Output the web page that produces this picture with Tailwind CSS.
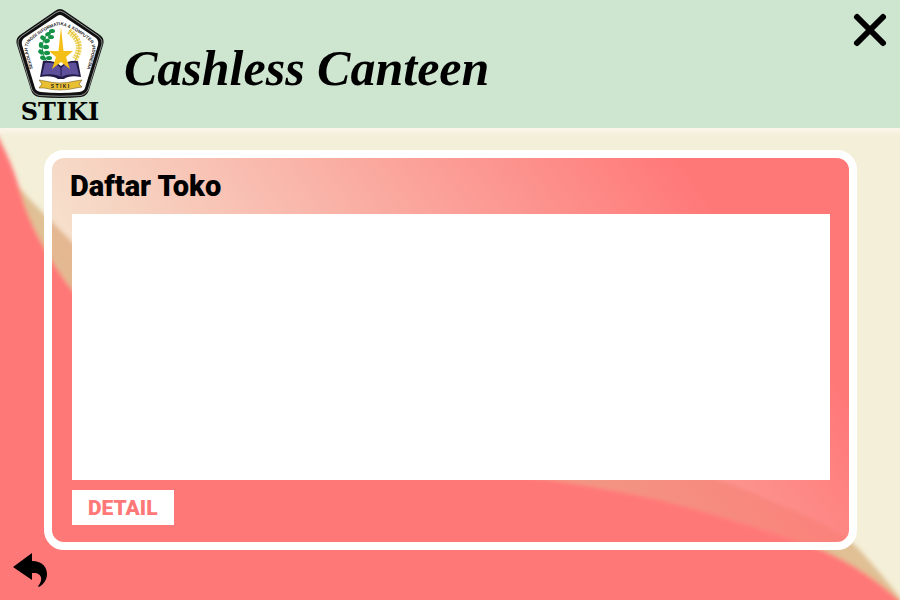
<!DOCTYPE html>
<html lang="id">
<head>
<meta charset="utf-8">
<meta name="viewport" content="width=device-width, initial-scale=1">
<title>Cashless Canteen</title>
<script src="https://cdn.jsdelivr.net/npm/@tailwindcss/browser@4"></script>
</head>
<body class="relative isolate flex min-h-screen flex-col bg-[#f4efd8] font-[Roboto,sans-serif] text-black">

<!-- Wave backdrop -->
<svg class="absolute inset-0 -z-10 h-full w-full" viewBox="0 0 900 600" preserveAspectRatio="none" aria-hidden="true">
  <defs><filter id="soft" x="-5%" y="-5%" width="110%" height="110%"><feGaussianBlur stdDeviation="2"/></filter></defs>
  <g filter="url(#soft)">
    <path fill="#e0c094" d="M-20 200 L10 176 Q24 194 44 214 Q58 228 72 242 C200 390 520 420 700 474 Q740 486 780 505 Q830 523 857 547 Q880 572 905 604 L905 620 L-20 620Z"/>
    <path fill="#ff7878" d="M-20 105 L0 140 C7 155 12 164 18 184 C25 210 34 230 44 247 Q58 272 72 290 C200 440 400 458 545 479 Q600 487 660 500 Q740 520 822 550 Q868 570 905 606 L905 630 L-20 630Z"/>
  </g>
</svg>

<header class="flex h-32 items-start bg-[#cee6d0] pl-4">
  <div class="flex w-22 flex-col items-center pt-2">
    <svg class="h-[90px] w-22" viewBox="16 8 88 90" role="img" aria-label="Lambang STIKI">
      <defs>
        <path id="ring" d="M36 80 L28 52 Q26 44 33 39 Q48 27 60 25 Q72 27 87 39 Q94 44 92 52 L84 80"/>
      </defs>
      <path fill="#111" d="M55 11 Q60 7 65 11 L100 35 Q105 39 103 45 L89 90 Q87 96 81 97 Q60 99 39 97 Q33 96 31 90 L17 45 Q15 39 20 35Z"/>
      <path fill="none" stroke="#dfe3df" stroke-width=".6" d="M56 12.500 Q60 9.500 64 12.500 L99 36.500 Q103 40 102 44 L88 90 Q86 94 81 95.500 Q60 97 39 95.500 Q34 94 32 90 L18 44 Q17 40 21 36.500Z"/>
      <path fill="#fff" d="M57 16 Q60 14 63 16 L96 38 Q99 41 98 45 L85 88 Q84 91 79 92 Q60 94 41 92 Q36 91 35 88 L22 45 Q21 41 24 38Z"/>
      <text font-family="Liberation Sans" font-size="4.400" font-weight="700" fill="#222"><textPath href="#ring" startOffset="50%" text-anchor="middle">SEKOLAH TINGGI INFORMATIKA &amp; KOMPUTER INDONESIA</textPath></text>
      <path fill="none" stroke="#149247" d="M53 29 Q35 43 47 62"/>
      <g fill="#149247">
        <ellipse cx="52" cy="31" rx="3" ry="2"/><ellipse cx="48" cy="34" rx="3" ry="2" transform="rotate(-25 48 34)"/>
        <ellipse cx="51" cy="37" rx="3" ry="2"/><ellipse cx="43" cy="38" rx="3" ry="2.200" transform="rotate(35 43 38)"/>
        <ellipse cx="47" cy="41" rx="3" ry="2.200" transform="rotate(-20 47 41)"/><ellipse cx="41" cy="45" rx="2.200" ry="3"/>
        <ellipse cx="46" cy="47" rx="3" ry="2.200"/><ellipse cx="41" cy="52" rx="3" ry="2.200" transform="rotate(35 41 52)"/>
        <ellipse cx="47" cy="53" rx="3" ry="2.200"/><ellipse cx="43" cy="58" rx="3" ry="2.200" transform="rotate(25 43 58)"/>
        <ellipse cx="49" cy="58" rx="3" ry="2"/>
      </g>
      <path fill="none" stroke="#efd45c" stroke-width="6" stroke-dasharray="2 .8" d="M69 31 Q85 43 75 59"/>
      <path fill="none" stroke="#d9b82e" stroke-width=".8" d="M69 30 Q86 43 75 61"/>
      <path fill="#211b48" d="M43 61 Q54 60 61 66 Q68 60 78 61 L81 77 Q69 75 64 79 L58 79 Q52 75 40 77Z"/>
      <path fill="#5e509b" d="M45 63 Q55 62 61 68 Q67 62 76 63 L79 75 Q68 73 61 77 Q54 73 42 75Z"/>
      <path fill="#211b48" d="M60.500 67h1v10h-1z"/>
      <path fill="#f5bf19" d="M61 27 L63.500 51 L73 51 L66 57 L70 69 L61 62 L52 69 L56 57 L49 51 L58.500 51Z"/>
      <path fill="#e9c033" stroke="#5f4b12" stroke-width=".5" d="M39 80 L45 81 Q60 85 75 81 L82 80 L79 84 L82 87 L76 88 Q60 92 44 88 L39 88 L42 84Z"/>
      <text x="60" y="88" text-anchor="middle" font-family="Liberation Sans" font-size="5" font-weight="700" fill="#222">S T I K I</text>
    </svg>
    <span class="font-['DejaVu_Serif',serif] text-2xl/7 font-bold">STIKI</span>
  </div>
  <h1 class="pt-9 pl-5 font-['Liberation_Serif',serif] text-[50px]/[64px] font-bold italic">Cashless Canteen</h1>
  <button type="button" aria-label="Tutup" class="mt-3 mr-3 ml-auto">
    <svg class="size-9" viewBox="0 0 36 36" fill="none" stroke="#000" stroke-width="6" stroke-linecap="round" aria-hidden="true"><path d="M5 5 31 31M31 5 5 31"/></svg>
  </button>
</header>
<div class="h-2 bg-linear-to-b from-[#fbf6ec] to-[#f4efd8]/0"></div>

<main class="mt-3.5 mr-[43px] ml-11 flex flex-1 flex-col items-start rounded-[20px] border-8 border-white bg-[linear-gradient(55deg,#ff787800_12%,#ff7878_84%)] pt-3 pr-[19px] pb-[17px] pl-5">
  <h2 id="daftar" class="-ml-0.5 pb-3 text-[29px]/8 font-black">Daftar Toko</h2>
  <ul aria-labelledby="daftar" class="w-full flex-1 bg-white"></ul>
  <button type="button" class="mt-2.5 bg-white px-4 pt-1 pb-[3px] text-[21px]/7 font-black text-[#ff7878]">DETAIL</button>
</main>

<footer class="h-[50px] pl-3">
  <button type="button" aria-label="Kembali" class="block pt-0.5">
    <svg class="size-9" viewBox="12 552 36 36" aria-hidden="true"><path d="M13 567 32 553V561C43 561 47 568 47 574C47 580 43 585 39 587L38 586C43 581 43 572 32 573V580Z"/></svg>
  </button>
</footer>
</body>
</html>
